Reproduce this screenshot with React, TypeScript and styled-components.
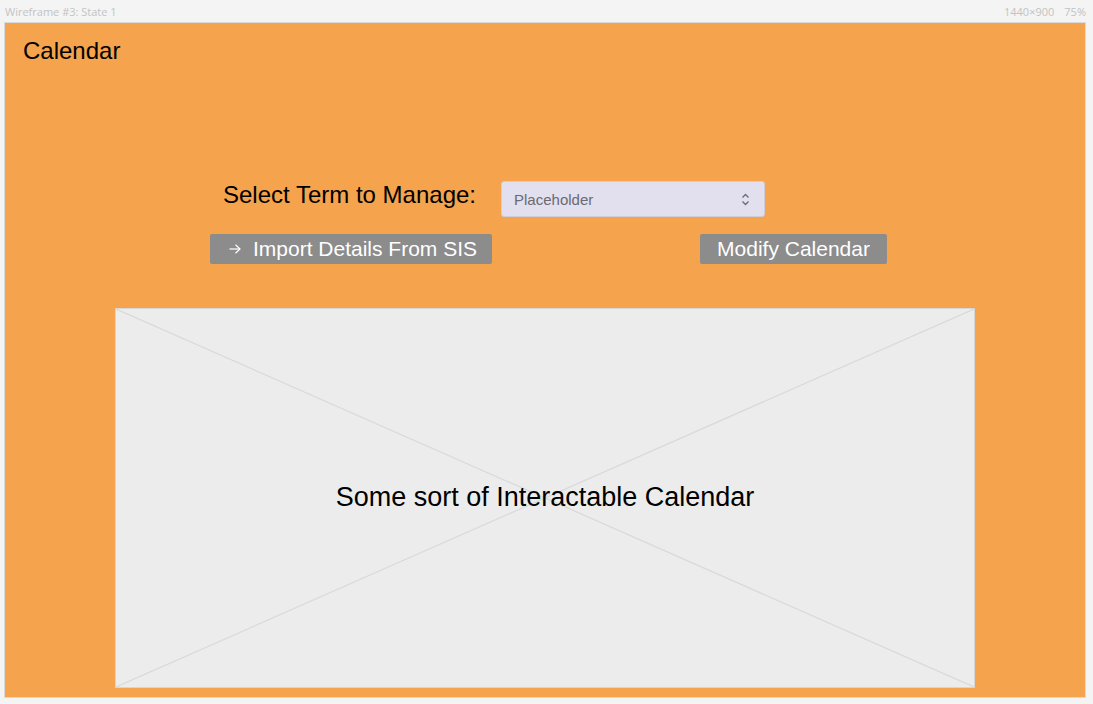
import React from "react";
import styled, { createGlobalStyle } from "styled-components";

const Global = createGlobalStyle`
  html, body { margin: 0; padding: 0; background: #f4f4f4; }
  body { font-family: "Liberation Sans", Arial, sans-serif; }
`;

const Page = styled.div`
  width: 1093px;
  height: 704px;
  background: #f4f4f4;
  display: flex;
  flex-direction: column;
  box-sizing: border-box;
  padding: 0 7px 0 4px;
`;

const TopBar = styled.div`
  height: 22px;
  display: flex;
  align-items: center;
  justify-content: space-between;
  padding: 0 0 0 1px;
  font-family: "Open Sans", sans-serif;
  font-size: 11px;
  color: #c3c3c3;
`;

const Meta = styled.div`
  display: flex;
  gap: 10px;
`;

const Frame = styled.div`
  width: 1082px;
  height: 676px;
  box-sizing: border-box;
  border: 1px solid #dadada;
  background: #f5a34c;
  display: flex;
  flex-direction: column;
  padding: 16px 0 0 0;
`;

const Title = styled.div`
  font-size: 24px;
  line-height: 24px;
  color: #000;
  padding-left: 18px;
`;

const TermRow = styled.div`
  display: flex;
  align-items: flex-start;
  margin-top: 118px;
  padding-left: 218px;
  gap: 25px;
`;

const Label = styled.div`
  font-size: 24px;
  line-height: 24px;
  color: #000;
  margin-top: 2px;
`;

const SelectBox = styled.div`
  width: 264px;
  height: 36px;
  box-sizing: border-box;
  border: 1px solid #d0ccd8;
  border-radius: 3px;
  background: #e2dfee;
  display: flex;
  align-items: center;
  justify-content: space-between;
  padding: 0 14px 0 12px;
  font-size: 15px;
  color: #6a6a72;
`;

const ButtonRow = styled.div`
  display: flex;
  margin-top: 17px;
  padding-left: 205px;
  gap: 208px;
`;

const Button = styled.div<{ $w: number; $pl?: number }>`
  width: ${(p) => p.$w}px;
  height: 30px;
  box-sizing: border-box;
  background: #8c8c8c;
  border-radius: 2px;
  color: #fff;
  font-size: 21px;
  display: flex;
  align-items: center;
  justify-content: ${(p) => (p.$pl ? "flex-start" : "center")};
  padding-left: ${(p) => p.$pl ?? 0}px;
  gap: 12px;
`;

const Canvas = styled.div`
  position: relative;
  margin: 44px 0 0 110px;
  width: 860px;
  height: 380px;
  box-sizing: border-box;
  border: 1px solid #d6d6d6;
  background: #ececec;
  display: flex;
  align-items: center;
  justify-content: center;
`;

const Cross = styled.svg`
  position: absolute;
  inset: 0;
  width: 100%;
  height: 100%;
`;

const CanvasText = styled.div`
  position: relative;
  font-size: 27px;
  color: #000;
  margin-top: -1px;
`;

export default function App() {
  return (
    <>
      <Global />
      <Page>
        <TopBar>
          <span>Wireframe #3: State 1</span>
          <Meta>
            <span>1440×900</span>
            <span>75%</span>
          </Meta>
        </TopBar>
        <Frame>
          <Title>Calendar</Title>
          <TermRow>
            <Label>Select Term to Manage:</Label>
            <SelectBox>
              <span>Placeholder</span>
              <svg width="9" height="13" viewBox="0 0 9 13" fill="none" stroke="#6a6a72" strokeWidth="1.3">
                <path d="M1.5 4.5 L4.5 1.5 L7.5 4.5" />
                <path d="M1.5 8.5 L4.5 11.5 L7.5 8.5" />
              </svg>
            </SelectBox>
          </TermRow>
          <ButtonRow>
            <Button $w={282} $pl={19}>
              <svg width="12" height="10" viewBox="0 0 12 10" fill="none" stroke="#fff" strokeWidth="1.2">
                <path d="M0.5 5 H11" />
                <path d="M6.5 0.8 L11 5 L6.5 9.2" />
              </svg>
              <span>Import Details From SIS</span>
            </Button>
            <Button $w={187}>Modify Calendar</Button>
          </ButtonRow>
          <Canvas>
            <Cross viewBox="0 0 858 378" preserveAspectRatio="none">
              <line x1="0" y1="0" x2="858" y2="378" stroke="#d9d9d9" strokeWidth="1.2" />
              <line x1="858" y1="0" x2="0" y2="378" stroke="#d9d9d9" strokeWidth="1.2" />
            </Cross>
            <CanvasText>Some sort of Interactable Calendar</CanvasText>
          </Canvas>
        </Frame>
      </Page>
    </>
  );
}
